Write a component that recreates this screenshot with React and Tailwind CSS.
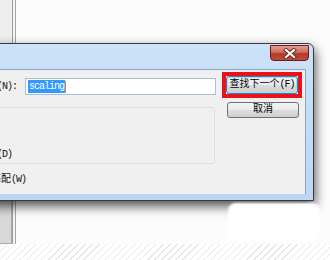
import React from "react";

const FONT = "font-['Liberation_Mono','Noto_Sans_CJK_SC',monospace]";

function A({ children }) {
  return <span className="tracking-[-1px]">{children}</span>;
}

export default function App() {
  return (
    <div className={`relative w-[330px] h-[260px] overflow-hidden bg-white ${FONT} text-[10px] leading-[12px] text-black`}>
      {/* background desktop window */}
      <div className="flex flex-col w-full h-full">
        <div className="flex flex-1">
          <div className="flex flex-col w-[12px]">
            <div className="flex-1 bg-[#eeeeee]" />
            <div className="h-[43px] bg-[#d9d9d9] border-r border-b border-[#aaaaaa]" />
          </div>
          <div className="w-px bg-[#9c9c9c]" />
          <div className="w-[2px] bg-[#f4f4f4]" />
          <div className="w-px bg-[#a6a6a6]" />
          <div className="flex-1 bg-[#fcfcfc]" />
        </div>
        <div className="h-[16px] bg-[repeating-linear-gradient(135deg,#e6e6e6_0px,#e6e6e6_1px,#ffffff_1px,#ffffff_5px)]" />
      </div>

      {/* dialog window */}
      <div className="absolute left-[-100px] top-[43px] w-[414px] h-[158px] border border-[#3a3a3a] rounded-tr-[6px] bg-[linear-gradient(180deg,#cbe2f9,#bcd6f3)] shadow-[1px_5px_12px_rgba(0,0,0,0.7)] flex flex-col">
        {/* title bar */}
        <div className="relative h-[25px] shrink-0">
          <div className="absolute right-[4px] top-[1px] w-[39px] h-[16px] rounded-b-[4px] border border-[#6b1c16] bg-[linear-gradient(180deg,#e3a093_0%,#cf6a5b_45%,#b6392b_55%,#c24a3a_100%)] flex items-center justify-center">
            <svg width="14" height="11" viewBox="0 0 14 11">
              <path d="M3 2 L11 9 M11 2 L3 9" stroke="#5a2a25" strokeWidth="4" strokeLinecap="square" />
              <path d="M3 2 L11 9 M11 2 L3 9" stroke="#ffffff" strokeWidth="2.2" strokeLinecap="square" />
            </svg>
          </div>
        </div>
        {/* content pane */}
        <div className="mr-[7px] mb-[6px] flex-1 bg-[#f0f0f0] border-t border-r border-[#8fa3ba] flex pl-[9px]">
          {/* left column */}
          <div className="flex flex-col">
            <div className="flex items-center gap-[8px] mt-[8px]">
              <div className="w-[107px] text-right text-[#111111]">
                查找内容<A>(N):</A>
              </div>
              <div className="w-[191px] h-[17px] bg-white border border-[#a9bfd6] flex items-center pl-[2px]">
                <span className="bg-[#3399ff] text-white px-[1px] leading-[13px]">
                  <A>scaling</A>
                </span>
                <span className="w-px h-[12px] bg-[#d98a45]" />
              </div>
            </div>
            <div className="ml-[50px] mt-[12px] w-[255px] h-[57px] border border-[#d5dfe5] rounded-[3px] pt-[41px]">
              <div className="w-[51px] text-right text-[#111111]">
                向下<A>(D)</A>
              </div>
            </div>
            <div className="mt-[10px] w-[116px] text-right text-[#111111]">
              全字匹配<A>(W)</A>
            </div>
          </div>
          {/* right column */}
          <div className="flex flex-col ml-[6px] pt-[2px]">
            <div className="border-[4px] border-[#e8121a] w-[80px]">
              <div className="h-[18px] w-[72px] rounded-[3px] border border-[#3c7fb1] shadow-[inset_0_0_0_1px_#9fe0f5] bg-[linear-gradient(180deg,#f3f3f3_0%,#ebebeb_50%,#dddddd_50%,#cfcfcf_100%)] flex items-center justify-center">
                查找下一个<A>(F)</A>
              </div>
            </div>
            <div className="mt-[4px] ml-[5px] h-[16px] w-[72px] rounded-[3px] border border-[#707070] bg-[linear-gradient(180deg,#f3f3f3_0%,#ebebeb_50%,#dddddd_50%,#cfcfcf_100%)] flex items-center justify-center">
              取消
            </div>
          </div>
        </div>
      </div>

      {/* white smudge over shadow */}
      <div className="absolute left-[228px] top-[203px] w-[92px] h-[38px] bg-white rounded-[8px] blur-[1px]" />
    </div>
  );
}
